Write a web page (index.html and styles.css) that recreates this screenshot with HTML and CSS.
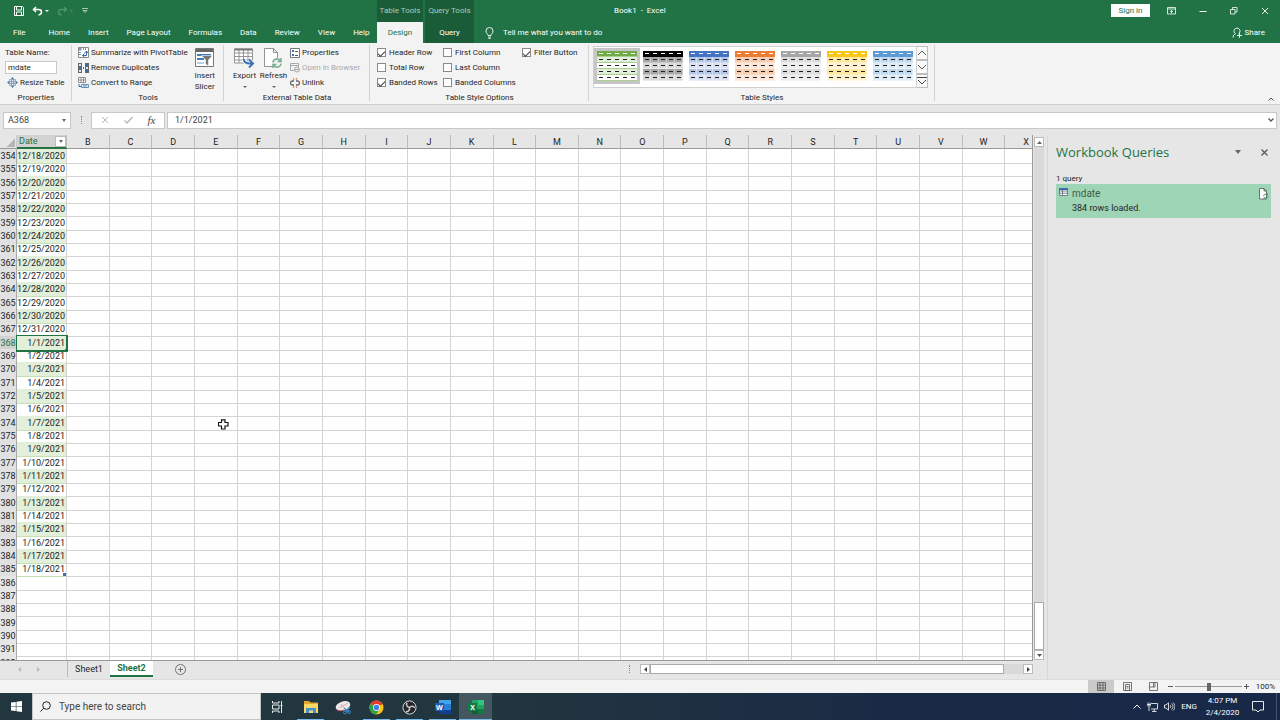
FILE: index.html
```
<!DOCTYPE html>
<html lang="en">
<head>
    <meta charset="UTF-8" />
    <meta name="viewport" content="width=device-width, initial-scale=1.0" />
    <title>Book1 - Excel</title>
    <link rel="stylesheet" href="styles.css">
</head>

<body>
    <header class="top">
        <div class="top-left">
            <div class="quick">
                <button aria-label="Save"><svg width="10" height="10" viewBox="0 0 10 10"><path d="M.5.5h8l1 1v8h-9z M2.5.5v3.5h5V.5 M2.5 9.5V6h5v3.500" fill="none" stroke="#fff"/></svg></button>
                <button aria-label="Undo"><svg width="17" height="10" viewBox="0 0 17 10"><path d="M4 1 1.500 3.500 4 6 M1.500 3.500h5c4 0 4 5 0 5.500" fill="none" stroke="#fff" stroke-width="1.500"/><path d="M13 4h4l-2 2z" fill="#fff"/></svg></button>
                <button aria-label="Redo" disabled><svg width="17" height="10" viewBox="0 0 17 10"><path d="M7 1l2.500 2.500L7 6 M9.500 3.500h-5c-4 0-4 5 0 5.500" fill="none" stroke="#4d9570" stroke-width="1.300"/><path d="M13 4h3l-1.500 2z" fill="#4d9570"/></svg></button>
                <button aria-label="Customize toolbar"><svg width="6" height="6" viewBox="0 0 6 6"><path d="M0 .5h6 M1 2.500h4L3 4.500z" fill="none" stroke="#dcebe2" stroke-width=".7"/></svg></button>
            </div>
            <nav class="tabs">
                <a href="#" class="file">File</a>
                <a href="#">Home</a>
                <a href="#">Insert</a>
                <a href="#">Page Layout</a>
                <a href="#">Formulas</a>
                <a href="#">Data</a>
                <a href="#">Review</a>
                <a href="#">View</a>
                <a href="#">Help</a>
            </nav>
        </div>
        <div class="context">
            <span>Table Tools</span>
            <a href="#" class="active">Design</a>
        </div>
        <div class="context">
            <span>Query Tools</span>
            <a href="#">Query</a>
        </div>
        <div class="top-right">
            <div class="title-row">
                <span class="title">Book1 &nbsp;-&nbsp; Excel</span>
                <button class="sign-in">Sign in</button>
                <button class="win" aria-label="Ribbon options"><svg width="9" height="8" viewBox="0 0 9 8"><path d="M.5.5h8v6.500h-8z M.5 2h8 M4.500 6.500v-3 M3 5l1.500-1.500L6 5" fill="none" stroke="#fff" stroke-width=".8"/></svg></button>
                <button class="win" aria-label="Minimize"><svg width="8" height="8" viewBox="0 0 8 8"><path d="M.5 4.500h7" stroke="#fff"/></svg></button>
                <button class="win" aria-label="Restore"><svg width="8" height="8" viewBox="0 0 8 8"><path d="M.5 2.500h4.500v4.500H.5z M2.500 2.500v-2h4.500v4.500H5" fill="none" stroke="#fff" stroke-width=".8"/></svg></button>
                <button class="win" aria-label="Close"><svg width="8" height="8" viewBox="0 0 8 8"><path d="M1 1l6 6 M7 1 1 7" stroke="#fff" stroke-width=".9"/></svg></button>
            </div>
            <div class="tell-row">
                <button class="tell"><svg width="9" height="12" viewBox="0 0 9 12"><path d="M3 8.500C3 7 1 6.500 1 4a3.500 3.500 0 0 1 7 0C8 6.500 6 7 6 8.500z M3 10h3 M3.500 11.500h2" fill="none" stroke="#fff" stroke-width=".9"/></svg>Tell me what you want to do</button>
                <button class="share"><svg width="10" height="11" viewBox="0 0 10 11"><path d="M1 10.500c0-2 1-3 2.500-3.800a3 3 0 1 1 3 0 M7.500 6v5 M5 8.500h5" fill="none" stroke="#fff" stroke-width=".9"/></svg>Share</button>
            </div>
        </div>
    </header>

    <section class="ribbon">
        <div class="group properties">
            <div class="group-body">
                <div class="stack">
                    <label for="tableName">Table Name:</label>
                    <input type="text" id="tableName" value="mdate" />
                    <button><svg width="11" height="11" viewBox="0 0 11 11"><path d="M2.500 2.500h6v6h-6z M2.500 4.500h6 M2.500 6.500h6 M4.500 2.500v6 M6.500 2.500v6" fill="#d6e2ef" stroke="#8291a3" stroke-width=".7"/><path d="M5.500 0 7 2H4z M5.500 11 7 9H4z M0 5.500 2 4v3z M11 5.500 9 4v3z" fill="#3d6da8"/></svg>Resize Table</button>
                </div>
            </div>
            <div class="group-name">Properties</div>
        </div>

        <div class="group tools">
            <div class="group-body">
                <div class="stack">
                    <button><svg width="11" height="11" viewBox="0 0 11 11"><path d="M.5.5h10v10H.5z" fill="#fff" stroke="#8a8a8a"/><path d="M1 1h2.500v2.500H1z M5 1h1v2H5z M7 1h1v2H7z M1 5h2v1H1z M1 7h2v1H1z" fill="#7f99b5"/><path d="M5 8.500h3.500V4.500 M6.500 6.500l-2 2 2 1.500 M6.500 6l2-2 1.500 2" fill="none" stroke="#2f69a5"/></svg>Summarize with PivotTable</button>
                    <button><svg width="11" height="10" viewBox="0 0 11 10"><path d="M0 0h4v10H0z M7 0h4v10H7z" fill="#666"/><path d="M1 1h2v2H1z M8 4h2v2H8z M1 7h2v2H1z" fill="#dce8f4"/><path d="M1 4h2v2H1z M8 1h2v2H8z M8 7h2v2H8z M5 4h1v2H5z" fill="#3d6da8"/></svg>Remove Duplicates</button>
                    <button><svg width="11" height="11" viewBox="0 0 11 11"><path d="M.5.5h7v5h-7z M.5 3h7 M3 .5v5 M5.500.5v5" fill="#fff" stroke="#777" stroke-width=".8"/><path d="M3.500 7.500h7v3h-7z M6 7.500v3 M8 7.500v3" fill="#dce8f4" stroke="#4e7cac" stroke-width=".8"/><path d="M1 7v2.500h2" fill="none" stroke="#3d6da8"/></svg>Convert to Range</button>
                </div>
                <button class="big"><svg width="19" height="20" viewBox="0 0 19 20"><path d="M.5.5h18v18H.5z" fill="#fff" stroke="#777"/><path d="M1 1h17v3H1z" fill="#666"/><path d="M2 6h14v2H2z M2 10h7v2H2z" fill="#3f7cba"/><path d="M2 14h7v2H2z" fill="#b9cfe4"/><path d="M6.500 7.500h11l-4 4.500v6l-3-2v-4z" fill="#777" stroke="#fff" stroke-width=".6"/></svg><span>Insert</span><span>Slicer</span></button>
            </div>
            <div class="group-name">Tools</div>
        </div>

        <div class="group external">
            <div class="group-body">
                <button class="big"><svg width="21" height="20" viewBox="0 0 21 20"><path d="M.5 1h18v14H.5z M.5 5h18 M.5 8.500h18 M.5 12h18 M5 1v14 M9.500 1v14 M14 1v14" fill="#fff" stroke="#8a8a8a" stroke-width=".9"/><path d="M.5.5h18v2H.5z" fill="#777"/><path d="M9.500 11c1 4 4 5 8 4.500 M15 11.500l4 4-4 4" fill="none" stroke="#f3f3f3" stroke-width="4"/><path d="M9.500 11c1 4 4 5 8 4.500 M15 11.500l4 4-4 4" fill="none" stroke="#3c72b4" stroke-width="2"/></svg><span>Export</span><i class="drop"></i></button>
                <button class="big"><svg width="19" height="20" viewBox="0 0 19 20"><path d="M.5.5h9l4 4v14H.5z M9.500.5v4h4" fill="#fff" stroke="#888" stroke-width=".9"/><circle cx="13" cy="15" r="5.500" fill="#f3f3f3"/><path d="M9 14.500a4 4 0 0 1 7.500-1.500 M17 15.500a4 4 0 0 1-7.500 1.500 M17 10v3.500h-3.500 M9 20v-3.500h3.500" fill="none" stroke="#76ad91" stroke-width="1.500"/></svg><span>Refresh</span><i class="drop"></i></button>
                <div class="stack">
                    <button><svg width="10" height="10" viewBox="0 0 10 10"><path d="M.5.5h9v9h-9z" fill="#fff" stroke="#777"/><path d="M2 2h2v2H2z M2 6h2v2H2z" fill="#3d76b5"/><path d="M5 3.500h3 M5 7.500h3" stroke="#555"/></svg>Properties</button>
                    <button disabled><svg width="10" height="10" viewBox="0 0 10 10"><path d="M6 7.500H.5v-7h8V4 M.5 2.500h8" fill="none" stroke="#aaa"/><circle cx="7" cy="6.500" r="2.500" fill="#eee" stroke="#aaa"/><path d="M4.500 6.500h5" stroke="#aaa"/></svg>Open in Browser</button>
                    <button><svg width="10" height="10" viewBox="0 0 10 10"><path d="M4 3H2.500a2 2 0 0 0 0 4H4 M6 3h1.500a2 2 0 0 1 0 4H6" fill="none" stroke="#666" stroke-width="1.300"/><path d="M3 0l1 2 M7 0 6 2 M3 10l1-2 M7 10 6 8" stroke="#d87b42"/></svg>Unlink</button>
                </div>
            </div>
            <div class="group-name">External Table Data</div>
        </div>

        <div class="group options">
            <div class="group-body">
                <div class="stack">
                    <label><input type="checkbox" checked />Header Row</label>
                    <label><input type="checkbox" />Total Row</label>
                    <label><input type="checkbox" checked />Banded Rows</label>
                </div>
                <div class="stack">
                    <label><input type="checkbox" />First Column</label>
                    <label><input type="checkbox" />Last Column</label>
                    <label><input type="checkbox" />Banded Columns</label>
                </div>
                <div class="stack">
                    <label><input type="checkbox" checked />Filter Button</label>
                </div>
            </div>
            <div class="group-name">Table Style Options</div>
        </div>

        <div class="group styles">
            <div class="group-body">
                <div class="gallery" id="gallery"></div>
                <div class="gallery-nav">
                    <button aria-label="Previous styles"><svg width="10" height="6" viewBox="0 0 10 6"><path d="M1 5l4-4 4 4" fill="none" stroke="#555"/></svg></button>
                    <button aria-label="Next styles"><svg width="10" height="6" viewBox="0 0 10 6"><path d="M1 1l4 4 4-4" fill="none" stroke="#555"/></svg></button>
                    <button aria-label="More styles"><svg width="10" height="8" viewBox="0 0 10 8"><path d="M0 .5h10 M1 3l4 4 4-4" fill="none" stroke="#444"/></svg></button>
                </div>
            </div>
            <div class="group-name">Table Styles</div>
        </div>

        <button class="collapse" aria-label="Collapse the ribbon"><svg width="6" height="4" viewBox="0 0 6 4"><path d="M.5 3.500 3 1l2.500 2.500" fill="none" stroke="#555"/></svg></button>
    </section>

    <section class="formula-bar">
        <div class="name-box">
            <input type="text" value="A368" aria-label="Name box" />
            <i class="drop"></i>
        </div>
        <i class="dots"></i>
        <div class="formula-buttons">
            <button aria-label="Cancel" disabled><svg width="8" height="8" viewBox="0 0 8 8"><path d="M1 1l6 6 M7 1 1 7" stroke="#b5b5b5"/></svg></button>
            <button aria-label="Enter" disabled><svg width="9" height="8" viewBox="0 0 9 8"><path d="M.5 4.500 3 7l5.500-6" fill="none" stroke="#b5b5b5" stroke-width="1.300"/></svg></button>
            <button aria-label="Insert function" class="fx">fx</button>
        </div>
        <div class="formula">
            <input type="text" value="1/1/2021" aria-label="Formula bar" />
            <svg width="6" height="4" viewBox="0 0 6 4"><path d="M.5.5 3 3 5.500.5" fill="none" stroke="#555" stroke-width="1.300"/></svg>
        </div>
    </section>

    <main class="work">
        <div class="book">
            <div class="sheet-row">
                <div class="sheet">
                    <table id="sheet">
                        <thead></thead>
                        <tbody></tbody>
                    </table>
                    <svg class="pointer" width="11" height="11" viewBox="0 0 11 11"><path d="M3.500.8h3.500v2.700h3v3.500H7v3H3.500v-3h-3V3.500h3z" fill="#fff" stroke="#111" stroke-width="1.200"/></svg>
                </div>
                <div class="scroll-v">
                    <button aria-label="Scroll up"><svg width="5" height="3" viewBox="0 0 5 3"><path d="M0 3 2.500 0 5 3z" fill="#666"/></svg></button>
                    <div class="track"><div class="thumb"></div></div>
                    <button aria-label="Scroll down"><svg width="5" height="3" viewBox="0 0 5 3"><path d="M0 0h5L2.500 3z" fill="#555"/></svg></button>
                </div>
            </div>
            <div class="sheet-tabs">
                <button class="step" aria-label="Previous sheet"><svg width="4" height="5" viewBox="0 0 4 5"><path d="M3 0v5L0 2.500z" fill="#bbb"/></svg></button>
                <button class="step" aria-label="Next sheet"><svg width="4" height="5" viewBox="0 0 4 5"><path d="M1 0v5l3-2.500z" fill="#bbb"/></svg></button>
                <button class="tab first">Sheet1</button>
                <button class="tab current">Sheet2</button>
                <button class="add" aria-label="New sheet"><svg width="11" height="11" viewBox="0 0 11 11"><path d="M5.500.5a5 5 0 1 0 .01 0z M5.500 3v5 M3 5.500h5" fill="none" stroke="#666" stroke-width=".9"/></svg></button>
                <i class="dots"></i>
                <div class="scroll-h">
                    <button aria-label="Scroll left"><svg width="3" height="5" viewBox="0 0 3 5"><path d="M3 0v5L0 2.500z" fill="#444"/></svg></button>
                    <div class="track"><div class="thumb"></div></div>
                    <button aria-label="Scroll right"><svg width="3" height="5" viewBox="0 0 3 5"><path d="M0 0v5l3-2.500z" fill="#444"/></svg></button>
                </div>
            </div>
        </div>

        <aside class="queries">
            <div class="queries-head">
                <h2>Workbook Queries</h2>
                <button aria-label="Pane options"><svg width="6" height="4" viewBox="0 0 6 4"><path d="M0 0h6L3 4z" fill="#666"/></svg></button>
                <button aria-label="Close pane"><svg width="7" height="7" viewBox="0 0 7 7"><path d="M.5.5l6 6 M6.500.5l-6 6" stroke="#555" stroke-width="1.200"/></svg></button>
            </div>
            <p class="count">1 query</p>
            <div class="query">
                <svg width="9" height="8" viewBox="0 0 9 8"><path d="M.5.5h8v7h-8z M.5 3h8 M.5 5.200h8 M3.500 2v5.500" fill="#fff" stroke="#567" stroke-width=".8"/><path d="M0 0h9v2H0z" fill="#3d6da8"/></svg>
                <div class="query-text">
                    <h3>mdate</h3>
                    <p>384 rows loaded.</p>
                </div>
                <svg width="10" height="12" viewBox="0 0 10 12"><path d="M.5.5h4.500L7.500 3v8h-7z M5 .5V3h2.500" fill="#fff" stroke="#555" stroke-width=".8"/><path d="M4.500 8a2.300 2.300 0 0 1 4-1v-1.500 M9 8.500a2.300 2.300 0 0 1-4 1V11" fill="none" stroke="#479067"/></svg>
            </div>
        </aside>
    </main>

    <div class="status">
        <button class="view on" aria-label="Normal"><svg width="9" height="9" viewBox="0 0 9 9"><path d="M.5.5h8v8h-8z M.5 3h8 M.5 6h8 M3 .5v8 M6 .5v8" fill="none" stroke="#555" stroke-width=".8"/></svg></button>
        <button class="view" aria-label="Page layout"><svg width="9" height="9" viewBox="0 0 9 9"><path d="M.5.5h8v8h-8z M2.500 2.500h4v6h-4z M3.500 4.500h2 M3.500 6h2" fill="none" stroke="#555" stroke-width=".8"/></svg></button>
        <button class="view" aria-label="Page break preview"><svg width="9" height="9" viewBox="0 0 9 9"><path d="M.5.5h8v8h-8z M4.500.5v4.500 M.5 5h5.500V.5" fill="none" stroke="#555" stroke-width=".8"/></svg></button>
        <button class="zoom-step" aria-label="Zoom out"><svg width="5" height="5" viewBox="0 0 5 5"><path d="M0 2.500h5" stroke="#555"/></svg></button>
        <input type="range" min="0" max="100" value="50" aria-label="Zoom" />
        <button class="zoom-step" aria-label="Zoom in"><svg width="5" height="5" viewBox="0 0 5 5"><path d="M0 2.500h5 M2.500 0v5" stroke="#555"/></svg></button>
        <span class="percent">100%</span>
    </div>

    <footer class="taskbar">
        <button class="start" aria-label="Start"><svg width="11" height="11" viewBox="0 0 11 11"><path d="M0 1.600 4.800.9v4.300H0z M5.400.8 11 0v5.200H5.400z M0 5.800h4.800v4.300L0 9.400z M5.400 5.800H11V11l-5.600-.8z" fill="#fff"/></svg></button>
        <label class="search">
            <svg width="11" height="11" viewBox="0 0 11 11"><circle cx="6.500" cy="4.500" r="3.800" fill="none" stroke="#222"/><path d="M3.800 7.200.5 10.500" stroke="#222"/></svg>
            <input type="text" placeholder="Type here to search" aria-label="Search" />
        </label>
        <button class="app" aria-label="Task view"><svg width="11" height="12" viewBox="0 0 11 12"><path d="M.5 0v2h6.500V0 M.5 4h6.500v4H.5z M.5 12v-2h6.500v2 M9.500 0v12 M8.500 4.500h2" fill="none" stroke="#fff" stroke-width=".9"/></svg></button>
        <button class="app open" aria-label="File Explorer"><svg width="16" height="14" viewBox="0 0 16 14"><path d="M1 1h5l1.500 1.500H15V13H1z" fill="#e4a82c"/><path d="M1 4h14v9H1z" fill="#fbd866"/><path d="M3 13V8h10v5h-3v-2.500H6V13z" fill="#3f94d3"/></svg></button>
        <button class="app" aria-label="Snip"><svg width="17" height="15" viewBox="0 0 17 15"><ellipse cx="8" cy="6" rx="7.500" ry="4.500" fill="#ece7e9" transform="rotate(-18 8 6)"/><path d="M4 8l9-5 M6 4l3 4" stroke="#d79a9e" stroke-width=".8"/><path d="M1.500 9.500c2 1.500 5 1.500 7.500.5" stroke="#c4555a" fill="none"/><path d="M9 8l5 4 M15 7l-5 5" stroke="#3b83bd" stroke-width="1.200"/><circle cx="14" cy="12" r="1.500" fill="none" stroke="#3b83bd"/><circle cx="10" cy="12.500" r="1.500" fill="none" stroke="#3b83bd"/></svg></button>
        <button class="app open" aria-label="Chrome"><svg width="15" height="15" viewBox="0 0 16 16"><circle cx="8" cy="8" r="7.500" fill="#fbc116"/><path d="M8 8 1.500 4.300a7.500 7.500 0 0 1 13 0z" fill="#e33b2e"/><path d="M8 8 1.500 4.300A7.500 7.500 0 0 0 7.500 15.500L11 10z" fill="#2da14c"/><circle cx="8" cy="8" r="3.700" fill="#fff"/><circle cx="8" cy="8" r="2.900" fill="#3f7fe8"/></svg></button>
        <button class="app open" aria-label="OBS"><svg width="15" height="15" viewBox="0 0 16 16"><circle cx="8" cy="8" r="7" fill="#23262a" stroke="#ddd"/><path d="M8 8C5 7 4 5 5.500 3 M8 8c2-2 4.500-2 5.500.5 M8 8c.5 3-1.500 5-4 4.500" fill="none" stroke="#ccc" stroke-width="1.600"/></svg></button>
        <button class="app open" aria-label="Word"><svg width="16" height="14" viewBox="0 0 16 14"><path d="M4 0h12v14H4z" fill="#2b7cd3"/><path d="M4 0h12v4H4z" fill="#41a5ee"/><path d="M4 10h12v4H4z" fill="#103f91"/><path d="M0 3h9v8H0z" fill="#185abd"/><text x="4.500" y="9.500" text-anchor="middle" class="glyph">W</text></svg></button>
        <button class="app open focused" aria-label="Excel"><svg width="16" height="14" viewBox="0 0 16 14"><path d="M4 0h12v14H4z" fill="#21a366"/><path d="M10 0h6v5h-6z" fill="#33c481"/><path d="M4 9h12v5H4z" fill="#185c37"/><path d="M10 9h6v5h-6z" fill="#107c41"/><path d="M0 3h9v8H0z" fill="#107c41"/><text x="4.500" y="9.500" text-anchor="middle" class="glyph">X</text></svg></button>
        <div class="tray">
            <button aria-label="Show hidden icons"><svg width="8" height="5" viewBox="0 0 8 5"><path d="M.5 4.500 4 1l3.500 3.500" fill="none" stroke="#fff"/></svg></button>
            <button aria-label="Network"><svg width="11" height="10" viewBox="0 0 11 10"><path d="M4 1.500h6.500v5.500H4 M5 9.500h4.500 M7.200 7v2.500 M0 2.500h4 M2 2.500V9 M1 .5v4 M3 .5v4" fill="none" stroke="#fff" stroke-width=".8"/></svg></button>
            <button aria-label="Volume"><svg width="11" height="9" viewBox="0 0 11 9"><path d="M.5 3h1.500L4.500.8v7.400L2 6H.5z M6 3c1 1 1 2 0 3 M7.500 1.500c2 2 2 4 0 6 M9 .5c2.500 2.500 2.500 5.500 0 8" fill="none" stroke="#fff" stroke-width=".8"/></svg></button>
            <button>ENG</button>
            <button class="clock"><span>4:07 PM</span><span>2/4/2020</span></button>
            <button aria-label="Notifications"><svg width="12" height="12" viewBox="0 0 12 12"><path d="M.5.5h11v8.500H8L6 11 4 9H.5z" fill="none" stroke="#fff" stroke-width=".9"/></svg></button>
        </div>
    </footer>

    <script>
        const FIRST_ROW = 354;
        const LAST_ROW = 392;
        const LAST_DATA_ROW = 385;
        const SELECTED_ROW = 368;
        const COLUMNS = "BCDEFGHIJKLMNOPQRSTUVWX".split("");
        const STYLES = ["green", "black", "blue", "orange", "gray", "gold", "sky"];

        // row 368 holds 1/1/2021, the rest are counted from it
        function dateForRow(row) {
            const d = new Date(2021, 0, 1 + row - SELECTED_ROW);
            return `${d.getMonth() + 1}/${d.getDate()}/${d.getFullYear()}`;
        }

        function buildSheet() {
            const head = `<tr><th class="corner"></th><th class="date-head"><span>Date</span><button aria-label="Filter Date"><i class="drop"></i></button></th>`
                + COLUMNS.map(c => `<th>${c}</th>`).join("") + "</tr>";
            let body = "";
            for (let row = FIRST_ROW; row <= LAST_ROW; row++) {
                const cls = [];
                if (row <= LAST_DATA_ROW) cls.push("data");
                if (row <= LAST_DATA_ROW && row % 2 === 0) cls.push("band");
                if (row === SELECTED_ROW) cls.push("selected");
                if (row === LAST_DATA_ROW) cls.push("last");
                body += `<tr class="${cls.join(" ")}"><th>${row}</th><td>${row <= LAST_DATA_ROW ? dateForRow(row) : ""}</td>`
                    + "<td></td>".repeat(COLUMNS.length) + "</tr>";
            }
            document.querySelector("#sheet thead").innerHTML = head;
            document.querySelector("#sheet tbody").innerHTML = body;
        }

        function buildGallery() {
            document.getElementById("gallery").innerHTML = STYLES.map(name =>
                `<button class="swatch ${name}" aria-label="Table style ${name}">${"<i></i>".repeat(25)}</button>`
            ).join("");
        }

        buildSheet();
        buildGallery();
    </script>
</body>
</html>
```
FILE: styles.css
```
* {
    box-sizing: border-box;
}

body {
    font-family: Roboto, "Open Sans", sans-serif;
    font-size: 8px;
    line-height: 12px;
    color: #262626;
    background: #e6e6e6;
    margin: 0;
    height: 100vh;
    display: flex;
    flex-direction: column;
    overflow: hidden;
}

button,
input {
    font: inherit;
    color: inherit;
    background: none;
    border: none;
    border-radius: 0;
    margin: 0;
    padding: 0;
}

button {
    display: flex;
    align-items: center;
    justify-content: center;
    white-space: nowrap;
}

a {
    color: inherit;
    text-decoration: none;
}

h2,
h3,
p {
    margin: 0;
    font-weight: normal;
}

svg {
    flex: none;
    display: block;
}

.drop {
    border: 2px solid transparent;
    border-top: 3px solid #666;
    border-bottom: none;
}

.dots {
    height: 8px;
    border-left: 1px dotted #888;
}

/* title bar and tabs */
.top {
    display: flex;
    height: 43px;
    flex: none;
    background: #217346;
    color: #fff;
}

.top-left {
    width: 377px;
}

.quick {
    display: flex;
    align-items: center;
    height: 22px;
    padding-left: 14px;
    gap: 8px;
}

.tabs {
    display: flex;
    height: 21px;
    align-items: center;
    padding-left: 13px;
    gap: 18px;
    white-space: nowrap;
}

.tabs .file {
    margin-right: 5px;
}

.context {
    width: 46px;
    margin-right: 2px;
    background: #1b5c38;
    text-align: center;
    line-height: 21px;
    white-space: nowrap;
}

.context + .context {
    width: 49px;
}

.context span {
    display: block;
    height: 22px;
    color: #a9cbb8;
}

.context a {
    display: block;
    height: 21px;
}

.context .active {
    background: #f3f3f3;
    color: #217346;
}

.top-right {
    flex: 1;
}

.title-row {
    display: flex;
    align-items: center;
    height: 21px;
    margin-bottom: 1px;
}

.title {
    flex: 1;
    padding-left: 138px;
}

.sign-in {
    width: 39px;
    height: 13px;
    margin-right: 6px;
    background: #fff;
    color: #217346;
}

.win {
    width: 31px;
    height: 20px;
}

.tell-row {
    display: flex;
    justify-content: space-between;
    height: 21px;
    padding: 0 15px 0 9px;
}

.tell {
    gap: 9px;
}

.share {
    gap: 3px;
}

/* ribbon */
.ribbon {
    display: flex;
    flex: none;
    height: 62px;
    background: #f3f3f3;
    border-bottom: 1px solid #cfcfcf;
    position: relative;
}

.group {
    display: flex;
    flex-direction: column;
    padding-top: 2px;
    position: relative;
}

.group::after {
    content: "";
    position: absolute;
    right: 0;
    top: 2px;
    bottom: 3px;
    border-right: 1px solid #d2d2d2;
}

.group-body {
    display: flex;
    flex: 1;
}

.group-name {
    height: 12px;
    text-align: center;
}

.stack {
    display: grid;
    grid-template-rows: repeat(3, 15px);
    align-content: start;
    align-items: center;
    justify-items: start;
    white-space: nowrap;
}

.stack button {
    gap: 2px;
}

.stack button:disabled {
    color: #aaa;
}

.big {
    flex-direction: column;
    justify-content: flex-start;
    padding-top: 3px;
    line-height: 11px;
}

.big svg {
    margin-bottom: 2px;
}

.big .drop {
    margin-top: 5px;
    border-width: 2px 2px 0;
}

.properties {
    width: 72px;
}

.properties .stack {
    padding-left: 5px;
}

.properties input {
    width: 52px;
    height: 13px;
    padding-left: 2px;
    background: #fff;
    border: 1px solid #c8c8c8;
}

.properties .stack button {
    padding-left: 2px;
}

.tools {
    width: 152px;
}

.tools .group-body {
    padding-left: 6px;
    justify-content: space-between;
    padding-right: 9px;
}

.external {
    width: 146px;
}

.external .group-body {
    padding-left: 7px;
    gap: 2px;
}

.external .big {
    width: 27px;
}

.external .stack {
    margin-left: 1px;
}

.options {
    width: 219px;
}

.options .group-body {
    display: grid;
    grid-template-columns: 66px 79px 1fr;
    padding-left: 7px;
}

.options label {
    display: flex;
    align-items: center;
    gap: 3px;
}

.options input {
    appearance: none;
    width: 9px;
    height: 9px;
    border: 1px solid #8a8a8a;
    background: #fff;
    display: grid;
    place-items: center;
}

.options input:checked::after {
    content: "";
    width: 6px;
    height: 3px;
    border: solid #444;
    border-width: 0 0 1px 1px;
    transform: rotate(-45deg);
}

.styles {
    width: 346px;
}

.styles .group-body {
    padding: 1px 0 4px 4px;
}

.gallery {
    display: flex;
    background: #fff;
    border: 1px solid #d0d0d0;
    width: 324px;
}

.swatch {
    width: 46px;
    height: 36px;
    display: grid;
    grid-template-columns: repeat(5, 8px);
    grid-template-rows: repeat(5, 6px);
    justify-content: center;
    align-content: center;
    align-items: stretch;
    margin-top: 1px;
}

.swatch i {
    background: var(--light);
    border-right: 1px solid #fff6;
    border-bottom: 1px solid #fff6;
    display: grid;
    place-items: center;
}

.swatch i::after {
    content: "";
    width: 4px;
    height: 1px;
    background: #222;
}

.swatch i:nth-child(n+6):nth-child(-n+10),
.swatch i:nth-child(n+16):nth-child(-n+20) {
    background: var(--band);
}

.swatch i:nth-child(-n+5) {
    background: var(--main);
    border-color: transparent;
}

.swatch i:nth-child(-n+5)::after {
    background: #fff;
}

.green {
    --main: #70ad47;
    --band: #e2efda;
    --light: #fff;
    background: #c6c6c6;
}

.swatch.green i {
    border-bottom-color: #a9d08e;
    border-right: none;
}

.black {
    --main: #000;
    --band: #a6a6a6;
    --light: #d9d9d9;
}

.blue {
    --main: #4472c4;
    --band: #b4c6e7;
    --light: #d9e1f2;
}

.orange {
    --main: #ed7d31;
    --band: #f8cbad;
    --light: #fce4d6;
}

.gray {
    --main: #a5a5a5;
    --band: #dbdbdb;
    --light: #ededed;
}

.gold {
    --main: #f5c518;
    --band: #ffe699;
    --light: #fff2cc;
}

.sky {
    --main: #5b9bd5;
    --band: #bdd7ee;
    --light: #ddebf7;
}

.gallery-nav {
    display: grid;
    grid-template-rows: repeat(3, 1fr);
    width: 11px;
}

.gallery-nav button {
    border: 1px solid #bdbdbd;
    border-left: none;
    background: #fafafa;
}

.collapse {
    position: absolute;
    right: 6px;
    bottom: 3px;
}

/* formula bar */
.formula-bar {
    display: flex;
    align-items: center;
    flex: none;
    height: 30px;
    padding: 0 3px;
    color: #444;
}

.name-box,
.formula-buttons,
.formula {
    display: flex;
    align-items: center;
    height: 17px;
    background: #fff;
    border: 1px solid #c8c8c8;
}

.name-box {
    width: 68px;
    padding: 0 4px;
}

.name-box input {
    width: 100%;
    flex: 1;
}

.formula-bar > .dots {
    margin: 0 9px 0 10px;
}

.formula-buttons {
    width: 74px;
    justify-content: space-around;
    padding: 0 1px;
}

.fx {
    font-family: "Liberation Serif", serif;
    font-style: italic;
    font-size: 11px;
}

.formula {
    flex: 1;
    margin-left: 2px;
    padding: 0 2px 0 7px;
}

.formula input {
    flex: 1;
}

.formula-bar input {
    font-size: 9px;
}

/* sheet */
.work {
    display: flex;
    flex: 1;
    min-height: 0;
}

.book {
    display: flex;
    flex-direction: column;
    flex: 1;
    min-width: 0;
    border-right: 1px solid #d6d6d6;
}

.sheet-row {
    display: flex;
    flex: 1;
    min-height: 0;
}

.sheet {
    flex: 1;
    min-width: 0;
    overflow: hidden;
    position: relative;
    border-right: 1px solid #999;
    border-bottom: 1px solid #999;
}

#sheet,
#sheet thead {
    display: block;
}

#sheet {
    width: 1048px;
    color: #222;
}

#sheet tbody {
    display: grid;
    grid-template-rows: repeat(39, 1fr);
    height: 520px;
    background: #fff;
    font-size: 9px;
}

#sheet tr {
    display: grid;
    grid-template-columns: 17px 50px repeat(23, 1fr);
    min-height: 0;
}

#sheet th,
#sheet td {
    padding: 0;
    min-width: 0;
    font-weight: normal;
    border-right: 1px solid #d4d4d4;
    border-bottom: 1px solid #d4d4d4;
}

#sheet tbody th,
#sheet tbody td {
    line-height: 14px;
}

#sheet thead th {
    height: 14px;
    line-height: 14px;
    font-size: 9px;
    border-right-color: #bbb;
    border-bottom-color: #999;
}

#sheet .corner {
    background: linear-gradient(135deg, transparent 50%, #b5b5b5 50%);
    background-size: 9px 9px;
    background-position: 6px 3px;
    background-repeat: no-repeat;
    border-right-color: #ccc;
}

#sheet .date-head {
    display: flex;
    justify-content: space-between;
    align-items: center;
    padding-left: 2px;
    background: #d2d2d2;
    color: #217346;
    border-bottom: 2px solid #217346;
}

.date-head button {
    width: 11px;
    height: 11px;
    background: #fff;
    border: 1px solid #bbb;
}

#sheet tbody th {
    background: #e6e6e6;
    border-right-color: #aaa;
    border-bottom-color: #d0d0d0;
    text-align: center;
}

#sheet tbody td:nth-child(2) {
    text-align: right;
    padding-right: 1px;
}

#sheet .data th {
    background: #e1e1e1;
}

#sheet .data td:nth-child(2) {
    border-bottom-color: #c6e0b4;
}

#sheet .band td:nth-child(2) {
    background: #e2efda;
}

#sheet .selected th {
    background: #d2d2d2;
    color: #217346;
}

#sheet .selected td:nth-child(2) {
    outline: 1px solid #217346;
    border-color: #217346;
    position: relative;
}

#sheet .selected td:nth-child(2)::after,
#sheet .last td:nth-child(2)::after {
    content: "";
    position: absolute;
    right: -2px;
    bottom: -2px;
    width: 3px;
    height: 3px;
    background: #217346;
}

#sheet .last td:nth-child(2) {
    position: relative;
}

#sheet .last td:nth-child(2)::after {
    right: 0;
    bottom: 0;
    background: #3d6da8;
}

.pointer {
    position: absolute;
    left: 218px;
    top: 284px;
}

.scroll-v {
    display: flex;
    flex-direction: column;
    width: 14px;
    padding: 2px 1px 1px;
}

.scroll-v button,
.scroll-h button {
    flex: none;
    width: 10px;
    height: 10px;
    background: #fff;
    border: 1px solid #bbb;
}

.track {
    display: flex;
    flex: 1;
    background: #d9d9d9;
}

.thumb {
    background: #fff;
    border: 1px solid #aaa;
}

.scroll-v .track {
    width: 10px;
    flex-direction: column;
    justify-content: flex-end;
}

.scroll-v .thumb {
    height: 48px;
}

.sheet-tabs {
    display: flex;
    align-items: center;
    flex: none;
    height: 18px;
    padding: 0 14px 2px 0;
}

.step {
    width: 18px;
}

.step:first-child {
    margin-left: 11px;
}

.tab {
    width: 43px;
    height: 16px;
    font-size: 9px;
}

.first {
    margin-left: 20px;
    border-left: 1px solid #bbb;
}

.current {
    background: #fff;
    color: #217346;
    font-weight: bold;
    border-bottom: 2px solid #217346;
}

.add {
    margin-left: 22px;
}

.sheet-tabs .dots {
    margin-left: auto;
}

.scroll-h {
    display: flex;
    width: 38%;
    max-width: 393px;
    margin-left: 10px;
}

.scroll-h .thumb {
    width: 95%;
}

/* queries pane */
.queries {
    width: 232px;
    padding: 6px 9px 0 8px;
}

.queries-head {
    display: flex;
    align-items: center;
    gap: 20px;
    height: 22px;
    color: #217346;
}

.queries-head h2 {
    flex: 1;
    font-family: "Open Sans", sans-serif;
    font-size: 13px;
    line-height: 20px;
}

.queries-head button:last-child {
    margin-right: 3px;
}

.count {
    margin-top: 10px;
    line-height: 11px;
}

.query {
    display: flex;
    align-items: flex-start;
    gap: 4px;
    height: 34px;
    padding: 3px 2px 0 3px;
    background: #9fd5b7;
}

.query > svg {
    margin-top: 1px;
}

.query-text {
    flex: 1;
}

.query h3 {
    font-size: 10px;
    line-height: 13px;
    color: #3c5c4b;
}

.query p {
    font-size: 9px;
    line-height: 16px;
}

/* status bar */
.status {
    display: flex;
    align-items: center;
    justify-content: flex-end;
    flex: none;
    height: 14px;
    padding-right: 5px;
    background: #f3f3f3;
    border-top: 1px solid #ddd;
}

.view {
    width: 26px;
    height: 13px;
}

.view.on {
    background: #cacaca;
}

.zoom-step {
    width: 9px;
    height: 13px;
}

.status input {
    appearance: none;
    width: 67px;
    height: 9px;
    background: linear-gradient(#999, #999) center / 100% 1px no-repeat;
}

.status input::-webkit-slider-thumb {
    appearance: none;
    width: 4px;
    height: 8px;
    background: #666;
}

.percent {
    width: 24px;
    text-align: right;
}

/* taskbar */
.taskbar {
    display: flex;
    flex: none;
    height: 27px;
    background: linear-gradient(90deg, #21363f 0%, #21363f 38%, #1a2a45 70%, #182848 100%);
    color: #fff;
}

.start {
    width: 32px;
}

.search {
    display: flex;
    align-items: center;
    gap: 8px;
    width: 229px;
    padding-left: 7px;
    background: #f2f2f2;
    border: 1px solid #c4c4c4;
    color: #333;
}

.search input {
    flex: 1;
    font-size: 10px;
    line-height: 16px;
}

.search input::placeholder {
    color: #444;
    opacity: 1;
}

.app {
    width: 33px;
    padding-top: 1px;
    position: relative;
}

.app.open::after {
    content: "";
    position: absolute;
    left: 3px;
    right: 3px;
    bottom: 0;
    height: 1px;
    background: #76b9ed;
}

.app.focused {
    background: #44575f;
}

.app.focused::after {
    left: 0;
    right: 0;
}

.glyph {
    font-family: "Open Sans", sans-serif;
    font-size: 7px;
    font-weight: bold;
    fill: #fff;
}

.tray {
    display: flex;
    align-items: center;
    gap: 6px;
    margin-left: auto;
    margin-right: 3px;
    padding-right: 12px;
    border-right: 1px solid #45536c;
}

.clock {
    flex-direction: column;
    width: 39px;
    margin-right: 4px;
}
```
